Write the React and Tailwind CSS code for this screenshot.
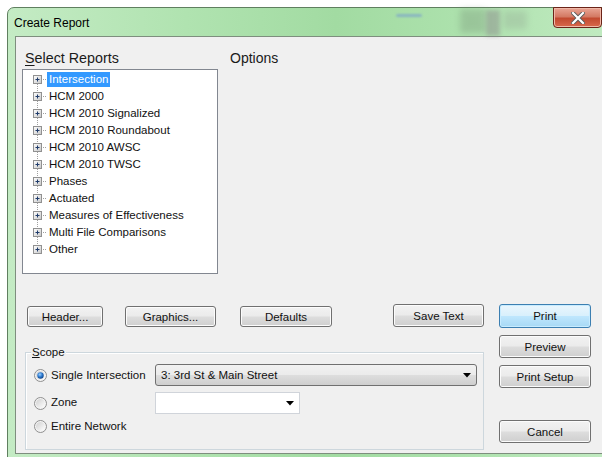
import React from "react";

const font = { fontFamily: '"Liberation Sans", Arial, sans-serif' };

const reports = [
  "Intersection",
  "HCM 2000",
  "HCM 2010 Signalized",
  "HCM 2010 Roundabout",
  "HCM 2010 AWSC",
  "HCM 2010 TWSC",
  "Phases",
  "Actuated",
  "Measures of Effectiveness",
  "Multi File Comparisons",
  "Other",
];

function TreeGlyph({ first, last }) {
  return (
    <svg width="14" height="17" viewBox="0 0 14 17" className="shrink-0">
      <defs>
        <linearGradient id="pb" x1="0" y1="0" x2="1" y2="1">
          <stop offset="0" stopColor="#ffffff" />
          <stop offset="1" stopColor="#c8c8c8" />
        </linearGradient>
      </defs>
      {!first && <line x1="4.5" y1="0" x2="4.5" y2="4" stroke="#a0a0a0" strokeDasharray="1 1" />}
      {!last && <line x1="4.5" y1="13" x2="4.5" y2="17" stroke="#a0a0a0" strokeDasharray="1 1" />}
      <line x1="10" y1="8.5" x2="14" y2="8.5" stroke="#a0a0a0" strokeDasharray="1 1" />
      <rect x="0.5" y="4.5" width="8" height="8" fill="url(#pb)" stroke="#919191" />
      <line x1="2.5" y1="8.5" x2="6.5" y2="8.5" stroke="#1f3b6b" />
      <line x1="4.5" y1="6.5" x2="4.5" y2="10.5" stroke="#1f3b6b" />
    </svg>
  );
}

function Btn({ children, className = "" }) {
  return (
    <div
      className={
        "flex items-center justify-center rounded-[3px] border border-[#707070] bg-[linear-gradient(#f2f2f2_0%,#ebebeb_48%,#dddddd_52%,#cfcfcf_100%)] pt-[2px] text-[11.5px] text-[#111] shadow-[inset_0_0_0_1px_#fcfcfc] " +
        className
      }
    >
      {children}
    </div>
  );
}

function Radio({ checked }) {
  return (
    <svg width="13" height="13" viewBox="0 0 13 13" className="shrink-0">
      <defs>
        <linearGradient id="rg" x1="0" y1="0" x2="1" y2="1">
          <stop offset="0" stopColor="#d0d0d0" />
          <stop offset="1" stopColor="#ffffff" />
        </linearGradient>
        <radialGradient id="rd" cx="0.4" cy="0.35" r="0.7">
          <stop offset="0" stopColor="#9fd4ff" />
          <stop offset="0.5" stopColor="#2f7bd1" />
          <stop offset="1" stopColor="#0b3f80" />
        </radialGradient>
      </defs>
      <circle cx="6.5" cy="6.5" r="6" fill="#f4f4f4" stroke="#8f8f8f" />
      <circle cx="6.5" cy="6.5" r="4.5" fill="url(#rg)" />
      {checked && <circle cx="6.5" cy="6.5" r="3.2" fill="url(#rd)" />}
    </svg>
  );
}

function Arrow() {
  return (
    <svg width="8" height="5" viewBox="0 0 8 5">
      <path d="M0 0 H8 L4 4.5 Z" fill="#000" />
    </svg>
  );
}

export default function App() {
  return (
    <div className="relative h-[457px] w-[602px] overflow-hidden bg-white" style={font}>
      <div className="ml-[7px] mt-[7px] flex h-[451px] w-[598px] flex-col rounded-tl-[7px] border border-[#5f7f5f] bg-[linear-gradient(90deg,#c4ebc4_0%,#b0e3b0_30%,#a2dba2_55%,#ace1ac_75%,#c0eac0_100%)]">
        {/* caption bar */}
        <div className="relative flex h-[28px] shrink-0 items-start justify-between">
          <div className="pl-[6px] pt-[8px] text-[12px] leading-[14px] text-black">Create Report</div>
          <div className="pointer-events-none absolute left-[388px] top-[6px] h-[3px] w-[26px] rounded-full bg-[#6c8fd8] opacity-50 blur-[1px]" />
          <div className="pointer-events-none absolute left-[452px] top-[1px] h-[24px] w-[26px] bg-[#7c9c7c] opacity-40 blur-[3px]" />
          <div className="pointer-events-none absolute left-[478px] top-[2px] h-[26px] w-[14px] bg-[#8c8c8c] opacity-50 blur-[2px]" />
          <div className="pointer-events-none absolute left-[495px] top-[3px] h-[18px] w-[24px] bg-[#98b098] opacity-40 blur-[3px]" />
          <div className="-mt-[1px] mr-[2px] flex h-[21px] w-[49px] items-center justify-center rounded-b-[4px] border border-[#6b2418] bg-[linear-gradient(#e9a595_0%,#d47a64_45%,#c24a30_55%,#d9694c_100%)] shadow-[inset_0_0_0_1px_#f0b8a8]">
            <svg width="14" height="12" viewBox="0 0 14 12">
              <path d="M2 1 L12 11 M12 1 L2 11" stroke="#5a5a5a" strokeWidth="4" strokeLinecap="square" />
              <path d="M2 1 L12 11 M12 1 L2 11" stroke="#ffffff" strokeWidth="2.2" strokeLinecap="square" />
            </svg>
          </div>
        </div>

        {/* client area */}
        <div className="ml-[7px] h-[418px] shrink-0 border border-[#7e8e7e] bg-[#f0f0f0]">
          <div className="flex pl-[6px] pt-[13px]">
            <div className="w-[196px]">
              <div className="ml-[3px] h-[16px] text-[14.3px] leading-[16px] text-[#1a1a1a]">
                <span className="underline underline-offset-2">S</span>elect Reports
              </div>
              <div className="mt-[3px] h-[205px] border border-[#828790] bg-white pl-[10px] pt-[1px]">
                {reports.map((r, i) => (
                  <div key={r} className="flex h-[17px] items-center">
                    <TreeGlyph first={i === 0} last={i === reports.length - 1} />
                    <span
                      className={
                        "px-[2px] text-[11.5px] leading-[15px] " +
                        (i === 0 ? "bg-[#3399ff] text-white" : "text-[#111]")
                      }
                    >
                      {r}
                    </span>
                  </div>
                ))}
              </div>
            </div>
            <div className="ml-[12px] h-[16px] text-[14px] leading-[16px] text-[#1a1a1a]">Options</div>
          </div>

          <div className="ml-[9px] mt-[30px] flex">
            <div className="w-[459px]">
              <div className="flex h-[23px] items-start">
                <Btn className="ml-[2px] mt-[2px] h-[21px] w-[76px]">Header...</Btn>
                <Btn className="ml-[22px] mt-[2px] h-[21px] w-[91px]">Graphics...</Btn>
                <Btn className="ml-[24px] mt-[2px] h-[21px] w-[92px]">Defaults</Btn>
                <Btn className="ml-[61px] h-[23px] w-[91px]">Save Text</Btn>
              </div>

              <div className="relative mt-[25px] h-[98px] border border-[#cdd7dd] shadow-[inset_1px_1px_0_#ffffff]">
                <div className="absolute -top-[8px] left-[5px] bg-[#f0f0f0] px-[1px] text-[11.5px] leading-[14px] text-[#111]">
                  <span className="underline">S</span>cope
                </div>
                <div className="ml-[8px] mt-[11px] flex h-[22px] items-center">
                  <Radio checked />
                  <span className="ml-[4px] w-[104px] pt-[1px] text-[11.5px] text-[#111]">Single Intersection</span>
                  <div className="flex h-[22px] w-[322px] items-center justify-between rounded-[3px] border border-[#707070] bg-[linear-gradient(#f2f2f2_0%,#ebebeb_48%,#dddddd_52%,#cfcfcf_100%)] pl-[5px] pr-[5px] text-[11.5px] text-[#111]">
                    <span className="pt-[1px]">3: 3rd St &amp; Main Street</span>
                    <Arrow />
                  </div>
                </div>
                <div className="ml-[8px] mt-[6px] flex h-[22px] items-center">
                  <Radio />
                  <span className="ml-[4px] w-[104px] text-[11.5px] text-[#111]">Zone</span>
                  <div className="flex h-[22px] w-[145px] items-center justify-end border border-[#d0d4da] bg-white pr-[5px]">
                    <Arrow />
                  </div>
                </div>
                <div className="ml-[8px] mt-[1px] flex h-[22px] items-center">
                  <Radio />
                  <span className="ml-[4px] pt-[1px] text-[11.5px] text-[#111]">Entire Network</span>
                </div>
              </div>
            </div>

            <div className="ml-[15px] flex w-[92px] flex-col">
              <div className="flex h-[24px] items-center justify-center rounded-[3px] border border-[#3c7fb1] bg-[linear-gradient(#eaf6fd_0%,#d9f0fc_48%,#bee6fd_52%,#a7d9f5_100%)] pt-[2px] text-[11.5px] text-[#111] shadow-[inset_0_0_0_1px_#c8ecff]">
                Print
              </div>
              <Btn className="mt-[7px] h-[23px]">Preview</Btn>
              <Btn className="mt-[7px] h-[23px]">Print Setup</Btn>
              <Btn className="mt-[32px] h-[23px]">Cancel</Btn>
            </div>
          </div>
        </div>
      </div>
    </div>
  );
}
